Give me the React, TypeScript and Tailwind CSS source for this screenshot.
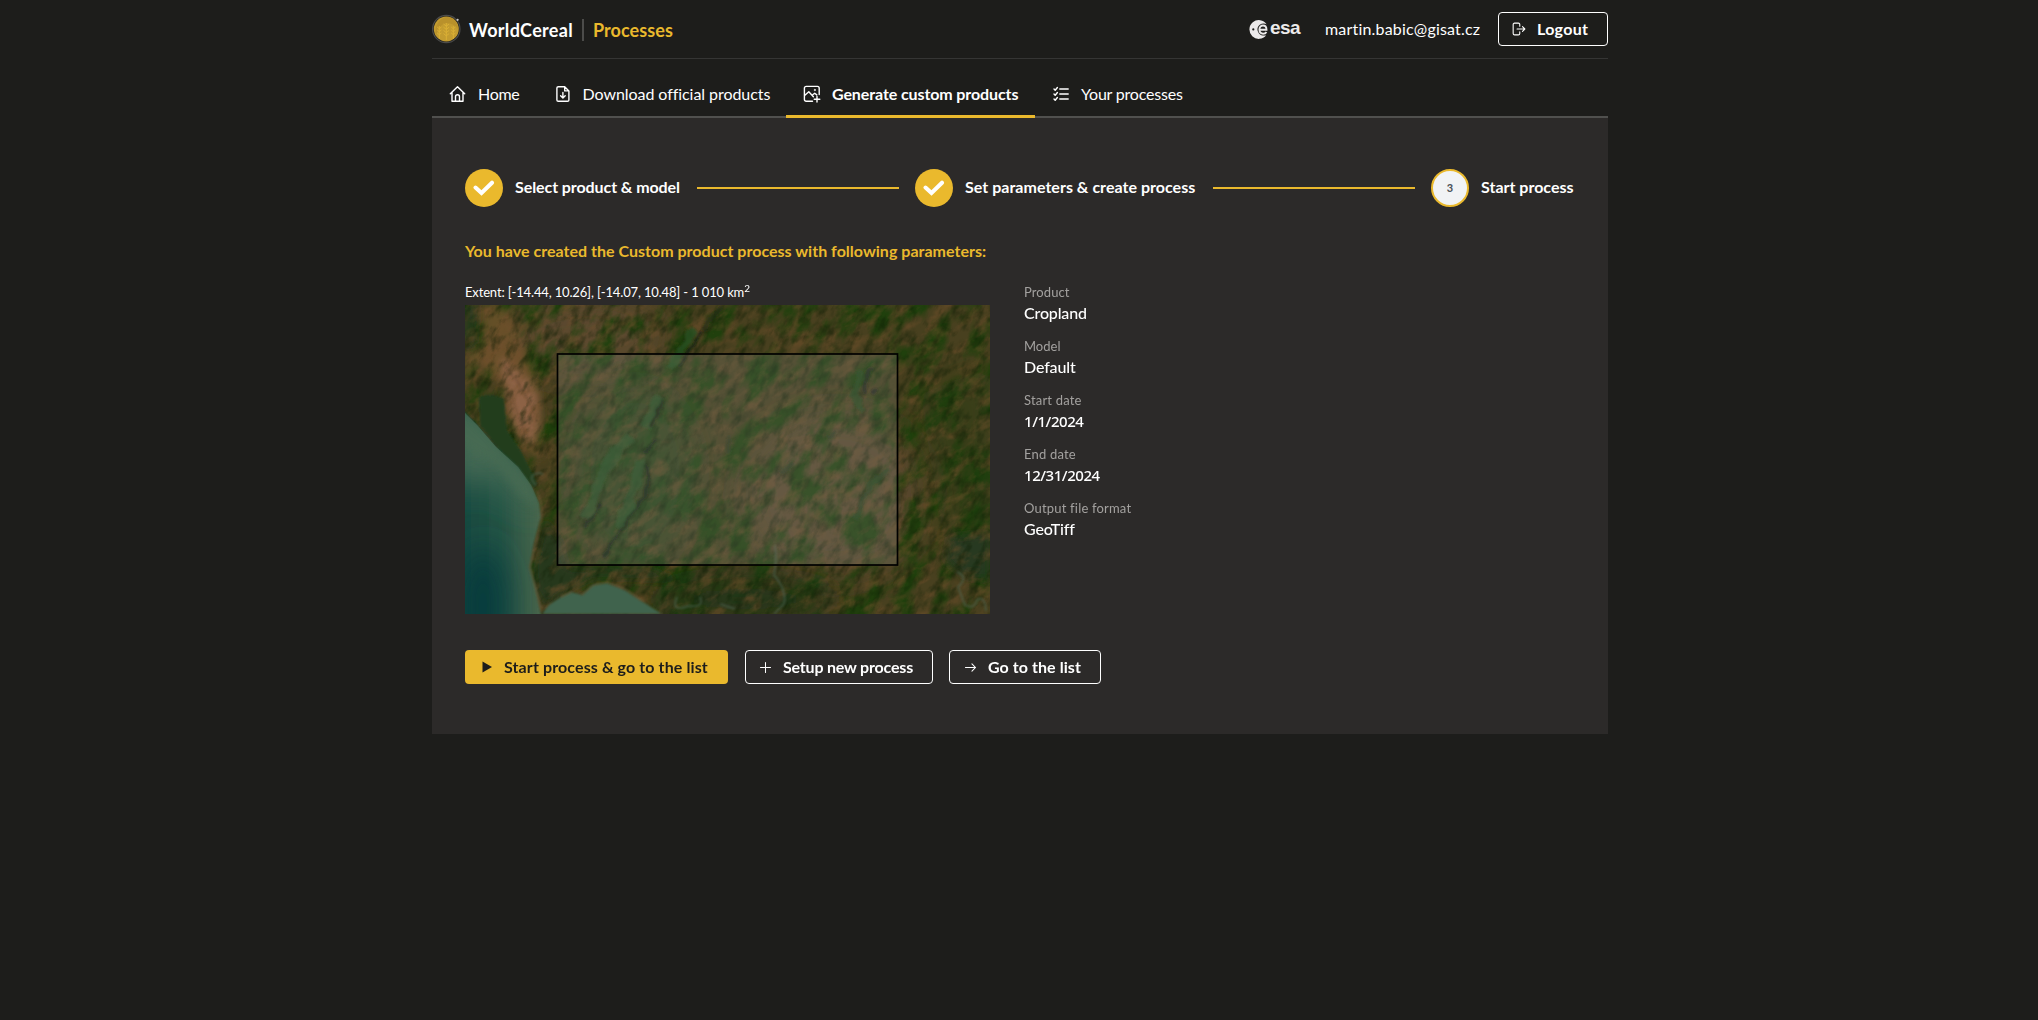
import type { ReactNode } from 'react';

function WorldCerealLogo() {
  return (
    <svg className="h-[30px] w-[29px] shrink-0" viewBox="0 0 29 30" fill="none">
      <circle cx="14.3" cy="15" r="13.7" stroke="#4b4b4a" strokeWidth="1.2" />
      <circle cx="14.3" cy="15" r="12.5" fill="#c39c30" />
      <path d="M4 22C2 12 7 4 15 3c7 0 11 6 11 12-3-4-7-6-11-6-5 0-9 5-11 13Z" fill="#b9912b" />
      <g stroke="#dcb136" strokeWidth=".9">
        <path d="M14.3 9v17M7.3 12v13M21.3 12v13" />
        <path d="m11.5 10 2.8 2.2 2.8-2.2M11.5 13.2l2.8 2.2 2.8-2.2M11.5 16.4l2.8 2.2 2.8-2.2M11.5 19.6l2.8 2.2 2.8-2.2" />
        <path d="m5.2 13 2.1 1.7L9.4 13M5.2 16l2.1 1.7L9.4 16M5.2 19l2.1 1.7L9.4 19" />
        <path d="m19.2 13 2.1 1.7 2.1-1.7M19.2 16l2.1 1.7 2.1-1.7M19.2 19l2.1 1.7 2.1-1.7" />
      </g>
      <circle cx="25.6" cy="5.8" r="1.1" fill="#c9c9c9" />
    </svg>
  );
}

function EsaLogo() {
  return (
    <div className="flex h-5 items-center text-[#eceaea]">
      <svg className="h-[19px] w-[19px]" viewBox="0 0 19 19" fill="none">
        <path d="M17.6 4.2A9.4 9.4 0 1 0 17.2 15.3C15 15.9 11.8 15.5 10 13.4 7.6 10.7 8.1 6.6 10.8 4.7c2.1-1.5 5-1.4 6.8-.5Z" fill="currentColor" />
        <circle cx="4.3" cy="9.4" r="1.1" fill="#1d1d1b" />
        <path d="M10.6 9.700h6.900c0-2.700-1.500-4.200-3.500-4.200s-3.600 1.700-3.600 4.100 1.500 4.100 3.800 4.100c1.500 0 2.600-.6 3.200-1.700" stroke="currentColor" strokeWidth="1.900" />
      </svg>
      <span className="relative -top-px ml-[2px] font-['Liberation_Sans'] text-[19px] leading-5 font-bold tracking-[-0.6px]">esa</span>
    </div>
  );
}

function Icon({ children, className = 'size-[18px]' }: { children: ReactNode; className?: string }) {
  return (
    <svg className={`${className} shrink-0`} viewBox="0 0 18 18" fill="none" stroke="currentColor" strokeWidth="1.4" strokeLinecap="round" strokeLinejoin="round">
      {children}
    </svg>
  );
}

const HomeIcon = () => (
  <Icon>
    <path d="M1.3 8.8 8.5 1.8l7.200 7M3 7.300v8.900h11V7.300M6.500 16v-4.200c0-1.300.8-2 2-2s2 .7 2 2V16" />
  </Icon>
);

const DownloadIcon = () => (
  <Icon>
    <path d="M4.3 1.700h6.400l4.200 4.200v9c0 .9-.5 1.400-1.400 1.400H4.300c-.9 0-1.400-.5-1.400-1.400V3.100c0-.9.5-1.400 1.400-1.400ZM10.700 1.900v4h4M8.900 7.500v5.300M6.600 10.700l2.300 2.300 2.300-2.300" />
  </Icon>
);

const ImageAddIcon = () => (
  <Icon>
    <path d="M9.500 16.200H3.200c-1.100 0-1.800-.7-1.800-1.800V3.200c0-1.100.7-1.800 1.800-1.800h11.200c1.100 0 1.800.7 1.800 1.800v6.300M1.600 10.500l4.200-3.800 4.600 5M9.700 9.700l2-1.500 2.100 1.700M14 11.400v5.600M11.200 14.200h5.600" />
    <circle cx="11.8" cy="5" r=".7" fill="currentColor" strokeWidth=".5" />
  </Icon>
);

const ListIcon = () => (
  <Icon>
    <path d="M7.800 4h8.400M7.800 9h8.400M7.800 14h8.400M2 4l1.200 1.200 2.200-2.700M2 9l1.200 1.200 2.200-2.700M2 14l1.200 1.200 2.200-2.700" />
  </Icon>
);

function Check() {
  return (
    <div className="flex size-[38px] shrink-0 items-center justify-center rounded-full bg-[#eab92d]">
      <svg className="h-4 w-[22px]" viewBox="0 0 22 16" fill="none">
        <path d="m2.500 7.500 6 5.500L19 2.700" stroke="#fff" strokeWidth="4" strokeLinecap="round" />
      </svg>
    </div>
  );
}

// Stylised satellite view of the coast around the selected extent.
function ExtentMap() {
  return (
    <svg className="block h-[309px] w-[525px]" viewBox="0 0 525 309">
      <defs>
        <filter id="forest" x="0" y="0" width="100%" height="100%" colorInterpolationFilters="sRGB">
          <feTurbulence type="fractalNoise" baseFrequency="0.027 0.047" numOctaves="6" seed="8" />
          <feColorMatrix values="0 0 0 0 0.1  0 0 0 0 0.25  0 0 0 0 0.04  3.6 0 0 0 -1.5" />
        </filter>
        <filter id="soil" x="0" y="0" width="100%" height="100%" colorInterpolationFilters="sRGB">
          <feTurbulence type="fractalNoise" baseFrequency="0.052 0.093" numOctaves="5" seed="21" />
          <feColorMatrix values="0 0 0 0 0.44  0 0 0 0 0.31  0 0 0 0 0.17  0 3 0 0 -1.4" />
        </filter>
        <filter id="shade" x="0" y="0" width="100%" height="100%" colorInterpolationFilters="sRGB">
          <feTurbulence type="fractalNoise" baseFrequency="0.067 0.121" numOctaves="4" seed="4" />
          <feColorMatrix values="0 0 0 0 0.06  0 0 0 0 0.12  0 0 0 0 0.02  0 0 2.4 0 -1.1" />
          <feGaussianBlur stdDeviation=".5" />
        </filter>
        <filter id="rough" x="-10%" y="-10%" width="120%" height="120%">
          <feTurbulence type="fractalNoise" baseFrequency="0.06" numOctaves="3" seed="3" result="n" />
          <feDisplacementMap in="SourceGraphic" in2="n" scale="9" xChannelSelector="R" yChannelSelector="G" />
          <feGaussianBlur stdDeviation="1" />
        </filter>
        <filter id="soft1"><feGaussianBlur stdDeviation=".8" /></filter>
        <filter id="soft4" x="-50%" y="-50%" width="200%" height="200%"><feGaussianBlur stdDeviation="4" /></filter>
        <filter id="soft14" x="-80%" y="-80%" width="260%" height="260%"><feGaussianBlur stdDeviation="16" /></filter>
        <linearGradient id="sea" x1="0" y1="0" x2="1" y2="0">
          <stop offset="0" stopColor="#164a41" />
          <stop offset=".5" stopColor="#245445" />
          <stop offset="1" stopColor="#4a674d" />
        </linearGradient>
        <clipPath id="seaClip">
          <path d="M0 108 12 120 31 142 53 162 66 180 74 198 76 212 69 238 65 262 71 285 77 309H0Z" />
        </clipPath>
        <clipPath id="frame"><rect width="525" height="309" /></clipPath>
      </defs>
      <g clipPath="url(#frame)">
        <rect width="525" height="309" fill="#48401f" />
        <ellipse cx="120" cy="30" rx="80" ry="40" fill="#5c4a2e" filter="url(#soft14)" />
        <ellipse cx="370" cy="190" rx="90" ry="80" fill="#5c4a2e" filter="url(#soft14)" />
        <rect x="-150" y="-250" width="820" height="820" filter="url(#forest)" opacity=".85" transform="rotate(-57 262 155)" />
        <path d="M455 90 525 60V250L480 240Z" fill="#1b3b0c" opacity=".4" filter="url(#soft14)" />
        <ellipse cx="170" cy="170" rx="60" ry="90" fill="#25471c" opacity=".55" filter="url(#soft14)" />
        <ellipse cx="280" cy="294" rx="95" ry="22" fill="#1c3313" opacity=".8" filter="url(#soft14)" />
        <path d="M485 232 525 228V275L500 272 480 255Z" fill="#203720" opacity=".8" filter="url(#soft4)" />
        <path d="M80 215 95 235 102 262 180 264 215 275 130 272 100 287 80 303 70 285 68 262Z" fill="#25391a" filter="url(#soft4)" />
        <path d="M15 0 45 5 60 45 73 85 74 135 78 155 62 145 42 112 38 80 10 55 0 85V50L20 40Z" fill="#75522f" opacity=".8" filter="url(#soft4)" />
        <path d="M34 50 56 66 72 88 74 122 66 140 50 122 42 90Z" fill="#91654a" opacity=".9" filter="url(#soft4)" />
        <path d="M0 0H13L10 38 0 44Z" fill="#24381c" filter="url(#soft4)" />
        <rect x="-150" y="-250" width="820" height="820" filter="url(#soil)" opacity=".55" transform="rotate(-35 262 155)" />
        <rect x="-150" y="-250" width="820" height="820" filter="url(#shade)" opacity=".6" transform="rotate(-62 262 155)" />
        <path d="M40 60 62 92M44 85 60 128M50 70 70 110" stroke="#5f432b" strokeWidth="1.200" opacity=".5" filter="url(#soft1)" />
        <path d="M14 92Q27 87 39 94L42 125 56 146 72 178 69 183 48 160 31 141 15 120Z" fill="#213d1f" filter="url(#soft1)" />
        <g filter="url(#rough)" fill="none">
          <path d="M229 24 216 45 204 63" stroke="#275223" strokeWidth="7" opacity=".8" />
          <path d="M195 92 186 112 180 122M166 132 145 155 133 180 120 214M176 155 168 190 153 225" stroke="#275626" strokeWidth="10" opacity=".6" />
          <path d="M237 24 224 47 212 62M198 95 190 112 184 122M190 134 180 148M182 162 184 178 174 198 160 218 146 240 138 254M136 198 120 222" stroke="#131e0e" strokeWidth="3" opacity=".85" />
          <path d="M257 0 240 24" stroke="#1d2b12" strokeWidth="4" opacity=".6" />
          <path d="M395 66 388 90 398 105" stroke="#24491a" strokeWidth="6" opacity=".7" />
          <path d="M408 62Q398 70 400 90M408 90 412 86" stroke="#1c2015" strokeWidth="4" opacity=".8" />
          <path d="M263 130V150M328 157 316 168M372 125 364 134" stroke="#27361c" strokeWidth="4" opacity=".7" />
          <path d="M425 163 408 178 395 198 390 214" stroke="#24451c" strokeWidth="5" opacity=".6" />
        </g>
        <path d="M121 42h3" stroke="#b69474" strokeWidth="3" filter="url(#soft1)" />
        <path d="M77 309 84 300 96 292 106 287 117 290 128 280 142 278 160 285 178 297 197 309Z" fill="#3f634d" filter="url(#soft1)" />
        <path d="M-4 104 12 120 31 142 53 162 66 180 74 198 76 212 69 238 65 262 71 285 77 313H-4Z" fill="url(#sea)" filter="url(#soft1)" />
        <g clipPath="url(#seaClip)">
          <path d="M-20 80 20 115 62 165 78 200 62 200 45 185 25 172 0 178-20 180Z" fill="#476b54" filter="url(#soft14)" />
          <path d="M-10 100 25 130 66 180 74 205 55 190 30 160-10 135Z" fill="#4a6c53" opacity=".7" filter="url(#soft4)" />
          <ellipse cx="18" cy="300" rx="24" ry="60" fill="#06363a" opacity=".8" filter="url(#soft14)" />
        </g>
        <path d="M72 186 76 198 77 212 71 238 65 262 71 285 77 307M96 292 106 287M117 290 128 280 142 277 160 284 178 296" fill="none" stroke="#7c6440" strokeWidth="1.500" opacity=".6" filter="url(#soft1)" />
        <path d="M71 180q-7-6-3-10 8-4 10 0M310 240Q312 257 309 270 322 285 319 299L309 309M492 267Q504 272 493 282L500 300Q509 305 512 295 520 290 521 306M212 292Q205 308 223 301 240 303 235 292M255 299 270 304" fill="none" stroke="#4e6450" strokeWidth="2" opacity=".6" filter="url(#soft1)" />
        <rect x="92.5" y="49" width="340" height="211" fill="#808a80" fillOpacity=".24" stroke="#000" strokeWidth="1.700" />
      </g>
    </svg>
  );
}

const details = [
  { label: 'Product', value: 'Cropland', labelClass: 'tracking-[0.1px]', valueClass: 'text-[16px] tracking-[-0.15px]' },
  { label: 'Model', value: 'Default', labelClass: '', valueClass: 'text-[16px] tracking-[-0.15px]' },
  { label: 'Start date', value: '1/1/2024', labelClass: 'tracking-[0.19px]', valueClass: "font-['Noto_Sans'] text-[15px] tracking-[-0.45px]" },
  { label: 'End date', value: '12/31/2024', labelClass: 'tracking-[0.19px]', valueClass: "font-['Noto_Sans'] text-[15px] tracking-[-0.45px]" },
  { label: 'Output file format', value: 'GeoTiff', labelClass: 'tracking-[0.19px]', valueClass: 'text-[16px] tracking-[-0.15px]' },
];

export default function App() {
  return (
    <div className="min-h-screen bg-[#1d1d1b] pl-[2px] font-['Lato',sans-serif] text-[16px] leading-5 whitespace-nowrap text-white">
      <div className="mx-auto w-[1176px]">
        <header className="flex h-[59px] items-center border-b border-[#353534]">
          <WorldCerealLogo />
          <span className="mt-px ml-2 w-[104px] text-[18px] font-bold tracking-[0.33px]">WorldCereal</span>
          <span className="mx-[9px] mt-[2px] h-[22px] w-[2px] bg-[#4c4c4a]" />
          <span className="mt-px text-[18px] font-bold tracking-[0.07px] text-[#eab92d]">Processes</span>
          <div className="ml-auto flex items-center">
            <div className="w-[76px]"><EsaLogo /></div>
            <span className="w-[156px] tracking-[0.19px]">martin.babic@gisat.cz</span>
            <button className="ml-[17px] flex h-[34px] w-[110px] items-center rounded-[4px] border border-white pl-[13px] font-bold tracking-[0.3px]">
              <Icon className="size-[14px]"><path d="M10 5.500V3.300c0-1.200-.6-1.800-1.800-1.800H3.300c-1.200 0-1.800.6-1.800 1.800v11.400c0 1.200.6 1.800 1.800 1.800h4.900c1.200 0 1.800-.6 1.800-1.800v-2.200M6.500 9h10M13.500 6l3 3-3 3" /></Icon>
              <span className="ml-[11px]">Logout</span>
            </button>
          </div>
        </header>

        <nav className="flex h-[59px] border-b-2 border-[#50504e] pt-3">
          <a className="flex h-[47px] w-[104.5px] items-center gap-[11px] pb-px pl-[17px] tracking-[-0.3px]"><HomeIcon />Home</a>
          <a className="flex h-[47px] w-[249.5px] items-center gap-[11px] pb-px pl-[17px] tracking-[-0.06px]"><DownloadIcon />Download official products</a>
          <a className="flex h-[47px] w-[249px] items-center gap-[11px] border-b-3 border-[#eab92d] pt-[2px] pl-[17px] font-bold tracking-[-0.1px]"><ImageAddIcon />Generate custom products</a>
          <a className="flex h-[47px] w-[150px] items-center gap-[11px] pb-px pl-[17px] tracking-[-0.2px]"><ListIcon />Your processes</a>
        </nav>

        <main className="h-[616px] bg-[#2c2a29] px-[33px] pt-[51px]">
          <div className="flex items-center font-bold">
            <Check />
            <span className="mb-[2px] ml-3 w-[166px] tracking-[-0.08px]">Select product &amp; model</span>
            <span className="mx-4 h-[2px] flex-1 bg-[#eab92d]" />
            <Check />
            <span className="mb-[2px] ml-3 w-[232px] tracking-[0.03px]">Set parameters &amp; create process</span>
            <span className="mx-4 h-[2px] flex-1 bg-[#eab92d]" />
            <span className="flex size-[38px] items-center justify-center rounded-full border-2 border-[#eab92d] bg-[#f1f3f5] text-[11px] text-[#495057]">3</span>
            <span className="mb-[2px] ml-3 w-[94px]">Start process</span>
          </div>

          <h1 className="mt-[34px] font-bold tracking-[0.02px] text-[#eab92d]">You have created the Custom product process with following parameters:</h1>

          <div className="mt-[21px] flex gap-[34px]">
            <div className="w-[525px]">
              <p className="h-[23px] text-[13px] leading-5 tracking-[-0.15px]">
                Extent: [-14.44, 10.26], [-14.07, 10.48] - 1 010 km<sup className="text-[10px]">2</sup>
              </p>
              <ExtentMap />
            </div>
            <dl className="flex flex-col gap-[10px]">
              {details.map((d) => (
                <div key={d.label} className="h-11">
                  <dt className={`text-[13px] text-[#a3a19f] ${d.labelClass}`}>{d.label}</dt>
                  <dd className={`mt-px font-medium ${d.valueClass}`}>{d.value}</dd>
                </div>
              ))}
            </dl>
          </div>

          <div className="mt-9 flex font-bold">
            <button className="flex h-[34px] w-[263px] items-center rounded-[4px] bg-[#eab92d] pl-[17px] tracking-[0.11px] text-[#1d1d1b]">
              <svg className="h-3 w-[10px]" viewBox="0 0 10 12" fill="currentColor"><path d="M.5.500 10 6 .5 11.500Z" /></svg>
              <span className="ml-3">Start process &amp; go to the list</span>
            </button>
            <button className="ml-[17px] flex h-[34px] w-[188px] items-center rounded-[4px] border border-white pl-[13px] tracking-[-0.19px]">
              <Icon className="size-[13px]"><path d="M9 2v14M2 9h14" /></Icon>
              <span className="ml-[11px]">Setup new process</span>
            </button>
            <button className="ml-4 flex h-[34px] w-[152px] items-center rounded-[4px] border border-white pl-[14px] tracking-[0.07px]">
              <Icon className="size-[13px]"><path d="M2 9h14M11 4l5 5-5 5" /></Icon>
              <span className="ml-[11px]">Go to the list</span>
            </button>
          </div>
        </main>
      </div>
    </div>
  );
}
